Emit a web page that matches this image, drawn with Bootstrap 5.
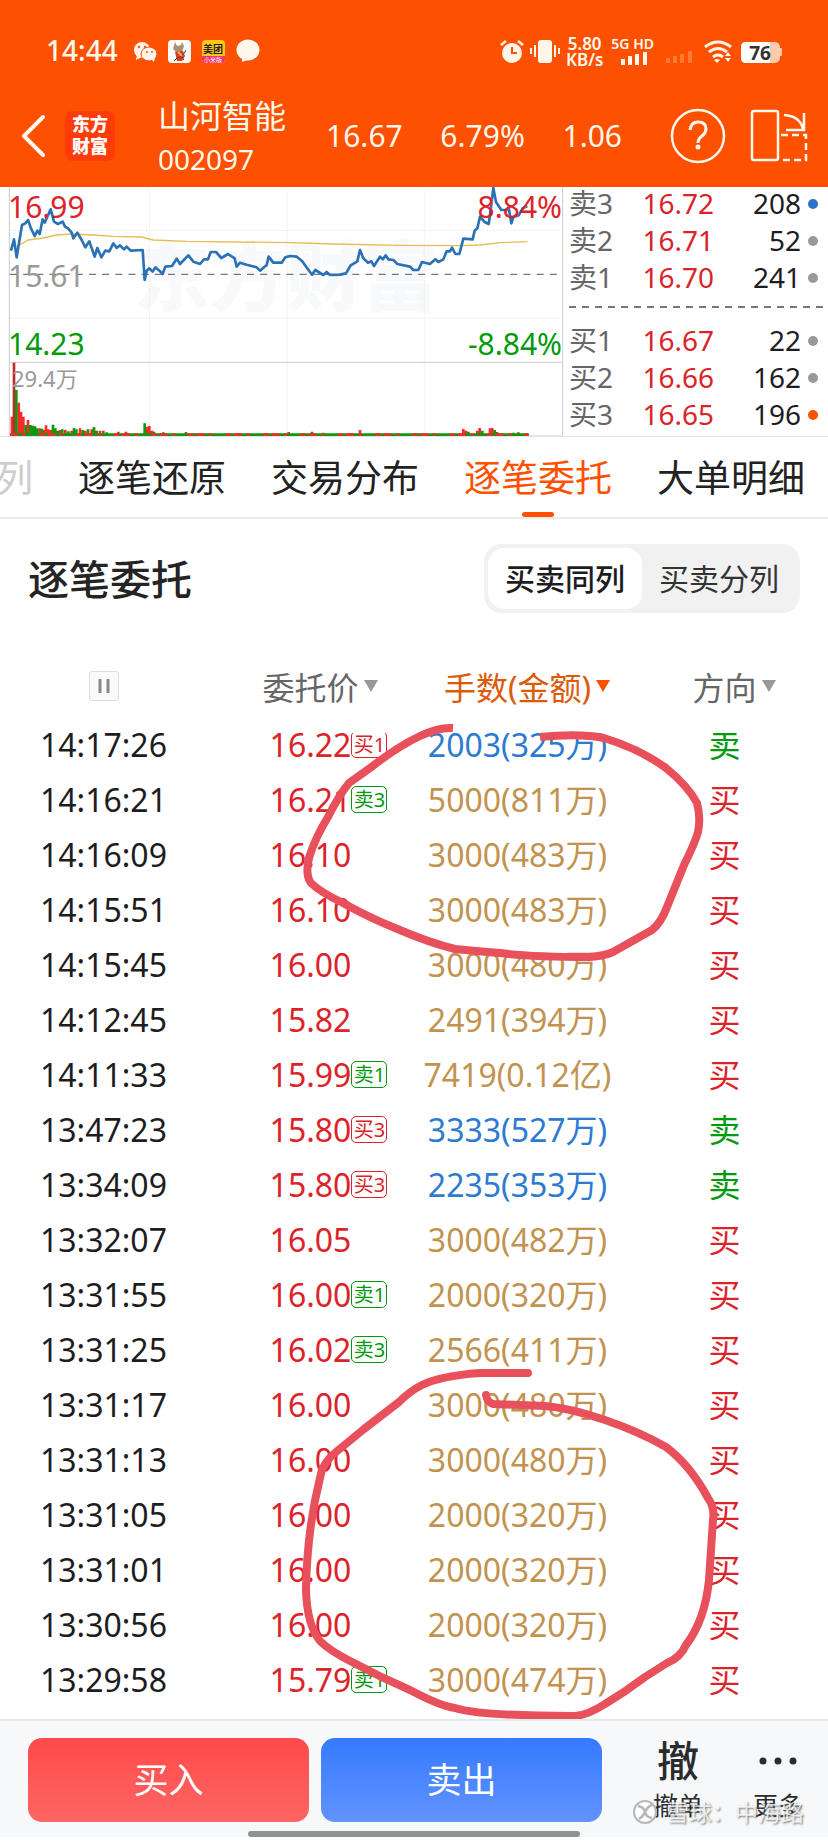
<!DOCTYPE html>
<html lang="zh-CN">
<head>
<meta charset="utf-8">
<meta name="viewport" content="width=device-width, initial-scale=1">
<title>山河智能 002097 逐笔委托</title>
<link href="https://cdn.jsdelivr.net/npm/bootstrap@5.3.0/dist/css/bootstrap.min.css" rel="stylesheet">
<style>
  :root { --brand:#fd5000; --up:#dc2329; --down:#009a0c; --blue:#2d7bd0; --gold:#c29350; }
  body { font-family:"Noto Sans","Noto Sans CJK SC",sans-serif; color:#1d1d1f; background:#fff; overflow-x:hidden; }
  svg { display:block; flex:none; }
  .topbar { background:var(--brand); color:#fff8ec; }
  .status { height:75px; padding:25px 46px 0 46px; }
  .clock { font-size:28px; line-height:50px; font-weight:500; width:88px; }
  .speed { font-size:17px; line-height:16px; font-weight:600; text-align:center; padding-top:3px; }
  .net { font-size:14px; line-height:15px; font-weight:600; }
  .quote { height:112px; padding:10px 20px 0 21px; font-size:30px; line-height:36px; }
  .logo-tile { width:50px; height:50px; border-radius:8px; background:#ff3c0a; color:#fff; font-size:18px; line-height:22px; font-weight:900; text-align:center; padding-top:2px; margin:0 43px 0 19px; }
  .stock-name { font-size:32px; line-height:46px; }
  .stock-code { font-size:28px; line-height:40px; }
  .quote .btn { border:0; padding:0; color:inherit; }
  .market { display:grid; grid-template-columns:565fr 263fr; border-bottom:1px solid #e3e3e3; }
  .chart { width:100%; height:auto; }
  .book { font-size:28px; line-height:37px; padding-left:4px; margin-top:-2px; }
  .book-row { display:grid; grid-template-columns:64px 1fr 87px 24px; align-items:center; padding-right:3px; }
  .book-row span { color:#666; } .book-row b { font-weight:400; color:var(--up); text-align:right; } .book-row em { font-style:normal; text-align:right; }
  .dot { width:10px; height:10px; border-radius:50%; background:#999; justify-self:center; }
  .book hr { margin:10px 4px 14px 0; border:0; height:2px; opacity:1; background:repeating-linear-gradient(90deg,#777 0 7px,transparent 7px 13px); }
  .tabs { height:82px; gap:45px; padding-right:23px; border-bottom:2px solid #ebebeb; overflow:hidden; }
  .tabs a { position:relative; flex:none; font-size:37px; line-height:82px; color:#222; text-decoration:none; white-space:nowrap; }
  .tabs a.faded { color:#ccc; }
  .tabs a.active { color:var(--brand); }
  .tabs a.active::after { content:""; position:absolute; left:50%; bottom:0; width:32px; height:5px; margin-left:-16px; border-radius:3px; background:var(--brand); }
  .section-head { height:123px; padding:0 28px 4px; }
  .section-head h1 { font-size:41px; line-height:60px; font-weight:500; color:#242424; margin:0; }
  .segment { background:#f1f1f2; border-radius:18px; padding:4px; height:69px; }
  .segment label { font-size:30px; line-height:62px; width:154px; text-align:center; border-radius:16px; color:#333; cursor:pointer; }
  .segment .btn-check:checked + label { background:#fff; color:#1d1d1f; font-weight:500; }
  .orders { position:relative; padding-bottom:12px; }
  .orders table { width:100%; table-layout:fixed; text-align:center; font-size:32px; }
  .orders th { height:91px; font-weight:400; color:#666; padding:0; }
  .orders td { padding:0; height:55px; line-height:55px; }
  .orders tr.cut td { height:39px; }
  .orders tr.cut div { height:39px; display:flex; align-items:flex-end; justify-content:center; overflow:hidden; }
  .sorter { position:relative; border:0; background:none; padding:0; color:inherit; }
  .sorter::after { content:""; position:absolute; left:100%; top:50%; margin:-8px 0 0 5px; border:7px solid transparent; border-top:12px solid #999; border-bottom:0; }
  .sorter.on { color:#dc5a0a; } .sorter.on::after { border-top-color:var(--brand); }
  .pause { width:30px; height:30px; border:1px solid #ddd; border-radius:3px; background:#fafafa; padding:0; }
  .pause svg { margin:auto; }
  .price { position:relative; color:var(--up); }
  .tag { position:absolute; left:100%; top:50%; margin:-14px 0 0; font-size:20px; line-height:25px; height:27px; width:36px; border:1px solid currentColor; border-radius:5px; white-space:nowrap; }
  .buy { color:var(--up); } .sell { color:var(--down); }
  .big { color:var(--gold); } .blue { color:var(--blue); }
  .scribble { position:absolute; left:0; top:0; width:100%; height:auto; pointer-events:none; }
  .dock { position:relative; background:#f6f8fa; border-top:2px solid #e8e8ea; padding-top:17px; }
  .dock-row { height:84px; padding:0 0 0 28px; gap:12px; }
  .trade { flex:281 1 0; padding:0; border:0; border-radius:14px; color:#fff; font-size:35px; }
  .trade.in { background:linear-gradient(#ff4a4a,#fd6664); } .trade.out { background:linear-gradient(#357aff,#6293ff); }
  .dock-side { flex:200 1 0; margin:0 0 0 14px; }
  .side-btn { flex:1; border:0; background:none; padding:0; color:#2b2b2e; font-size:25px; line-height:34px; }
  .side-btn .glyph { display:flex; height:46px; margin-bottom:4px; align-items:center; justify-content:center; font-size:42px; font-weight:500; line-height:46px; }
  .home { width:40%; height:6px; border-radius:3px; background:#8f9391; margin:9px auto 3px; }
  .source { position:absolute; right:24px; bottom:8px; font-size:23px; line-height:34px; color:rgba(255,255,255,.8); text-shadow:1px 1px 2px #777; pointer-events:none; gap:8px; }
</style>
</head>
<body>
<header class="topbar">
  <div class="status d-flex align-items-start justify-content-between">
    <div class="d-flex align-items-center">
      <span class="clock">14:44</span>
      <svg width="132" height="50" viewBox="134 25 132 50">
        <ellipse cx="142" cy="50" rx="8" ry="8" fill="#fff5e8"/><path d="M137 55l-1 5 6-3z" fill="#fff5e8"/>
        <ellipse cx="149" cy="54" rx="8" ry="7" fill="#fff5e8" stroke="#fd5000"/><path d="M151 59l3 3 1-5z" fill="#fff5e8"/>
        <g fill="#fd5000"><circle cx="139" cy="47" r="1.2"/><circle cx="145" cy="47" r="1.2"/><circle cx="147" cy="52" r="1"/><circle cx="152" cy="52" r="1"/></g>
        <rect x="168" y="40" width="23" height="23" rx="4" fill="#fff"/>
        <path d="M175 42l2 4 4-1 1-3 2 4-2 6-5 1-4-4z" fill="#a99172"/><path d="M175 52l8-1 2 5-3 5h-5z" fill="#e0382c"/><path d="M186 50c-3 6-5 6-10 9m2-7 6 8m-7-2-3 3" stroke="#453b30" fill="none"/><path d="M178 52l4 4" stroke="#f2c230" stroke-width="2"/>
        <rect x="202" y="40" width="23" height="23" rx="4" fill="#ffc81a"/><path d="M202 56h23v3q0 4-4 4h-15q-4 0-4-4z" fill="#f5326e"/>
        <text x="213" y="53" font-size="10" font-weight="700" text-anchor="middle" fill="#222">美团</text>
        <text x="213" y="62" font-size="6" text-anchor="middle" fill="#fff">小米版</text>
        <ellipse cx="248" cy="50" rx="11.5" ry="10.5" fill="#fff8ec"/><path d="M242 57v5l8-3z" fill="#fff8ec"/>
      </svg>
    </div>
    <div class="d-flex align-items-center">
      <svg width="64" height="50" viewBox="496 25 64 50" fill="none" stroke="#fff5e8" stroke-width="2">
        <circle cx="510" cy="53" r="10" fill="#fff5e8" stroke="none"/><path d="M499 45l5-4m12 0 5 4" stroke-width="2.5"/><path d="M510 47v6h5" stroke="#fd5000"/>
        <rect x="536" y="40" width="14" height="23" rx="3" fill="#fff5e8" stroke="none"/><path d="M533 45v12m-4-9v6m24-9v12m4-9v6"/>
      </svg>
      <div class="speed ms-1">5.80<br>KB/s</div>
      <div class="net ms-2">5G HD
        <svg width="38" height="14" viewBox="0 0 38 14" fill="#fff8ec"><path d="M10 8h4v6h-4zM17 5h4v9h-4zM24 3h4v11h-4zM32 1h4v13h-4z"/></svg>
      </div>
      <svg class="ms-1" width="124" height="50" viewBox="658 25 124 50">
        <path d="M666 58h4v5h-4zM673 56h4v7h-4zM680 54h4v9h-4zM688 51h4v12h-4z" fill="#ff7a35"/>
        <g fill="none" stroke="#fff5e8" stroke-width="3"><path d="M705 47q13-10 26 0M709 52q9-7 18 0M713 57q5-4 10 0"/></g>
        <path d="M714 60q3-2 6 0l-3 3z" fill="#fff5e8"/><path d="M725 56l3-4 3 4zM725 58l3 4 3-4z" fill="#fff5e8"/>
        <rect x="741" y="42" width="39" height="21" rx="5" fill="#ffc9ac"/><path d="M746 42h24v21h-24q-5 0-5-5v-11q0-5 5-5z" fill="#fff"/><rect x="779" y="48" width="3" height="8" rx="1" fill="#ffc9ac"/>
        <text x="760" y="60" font-size="19" font-weight="700" text-anchor="middle" fill="#333">76</text>
      </svg>
    </div>
  </div>
  <div class="quote d-flex align-items-center">
    <button class="btn" aria-label="返回"><svg width="25" height="44" viewBox="0 0 25 44" fill="none" stroke="#fff8ec" stroke-width="4" stroke-linecap="round" stroke-linejoin="round"><path d="M22 3 3 22l19 19"/></svg></button>
    <div class="logo-tile">东方<br>财富</div>
    <div class="me-4">
      <div class="stock-name">山河智能</div>
      <div class="stock-code">002097</div>
    </div>
    <div class="d-flex flex-grow-1 justify-content-between ps-3 pe-5"><span>16.67</span><span>6.79%</span><span>1.06</span></div>
    <button class="btn" aria-label="帮助"><svg width="56" height="56" viewBox="0 0 56 56" fill="none" stroke="#fff8ec" stroke-width="2.5"><circle cx="28" cy="28" r="26"/><path d="M20 22q1-8 8-8 8 0 8 7 0 4-4 7-4 3-4 7" stroke-width="3"/><circle cx="28" cy="39" r="2.5" fill="#fff8ec" stroke="none"/></svg></button>
    <button class="btn ms-4" aria-label="横屏"><svg width="58" height="54" viewBox="0 0 58 54" fill="none" stroke="#fff8ec" stroke-width="2.5"><rect x="2" y="2" width="26" height="49" rx="2"/><path d="M34 6q16 1 19 14M54 4v17H36"/><path d="M31 26h25v25H31" stroke-dasharray="7 4"/></svg></button>
  </div>
</header>

<section class="market">
  <svg class="chart" viewBox="0 0 565 249">
    <text x="134" y="118" font-size="76" font-weight="900" fill="#f8f9fa">东方财富</text>
    <g transform="scale(.33333) translate(0 -21)" fill="none">
      <path d="M448 30V768M861 30V768M1273 30V768M30 151H1685M30 414H1685" stroke="#ddd" stroke-width="3" stroke-dasharray="3 5"/>
      <path d="M28 22V768M1688 22V768M28 547H1686M28 768H1688" stroke="#ccc" stroke-width="3"/>
      <path d="M30 283H1686" stroke="#777" stroke-width="4" stroke-dasharray="21 18.5"/>
      <path d="M50 200 85 180 130 174 170 165 215 162 280 165 340 169 425 171 460 180 560 184 870 188 1000 192 1200 196 1380 197 1440 195 1500 188 1582 185" stroke="#e6bd52" stroke-width="4"/>
      <g stroke-width="8">
        <path stroke="#f82a2c" d="M36 767V710M56 767V668M63 767V695M70 767V710M84 767V720M119 767V745M133 767V750M138 767V736M145 767V748M152 767V750M180 767V750M196 767V750M215 767V752M240 767V745M256 767V752M275 767V748M300 767V752M310 767V752M355 767V755M378 767V755M441 767V740M448 767V738M456 767V752M558 767V756M866 767V756M1080 767V750M1390 767V747M1398 767V752M1432 767V752M1439 767V744M1470 767V745M1477 767V744M1555 767V757"/>
        <path stroke="#c02a2c" d="M42 767V548"/>
        <path stroke="#12960f" d="M49 767V630M77 767V735M91 767V735M98 767V737M105 767V739M112 767V745M126 767V746M159 767V734M166 767V745M173 767V752M187 767V748M205 767V754M222 767V744M229 767V748M248 767V750M264 767V748M282 767V741M290 767V752M320 767V757M434 767V730M462 767V755M490 767V757M936 767V755M970 767V758M1405 767V755M1447 767V752M1484 767V750M1491 767V756M1540 767V758"/>
        <path stroke="#12960f" d="M30 764H1586"/><path stroke="#e8302a" d="M30 764H1586" stroke-dasharray="24 14 9 40 16 9"/>
      </g>
      <path stroke="#2b71b5" stroke-width="8" stroke-linejoin="round" d="M33 212 42 178 50 232 66 135 76 130 84 120 93 145 104 168 112 152 119 162 128 118 134 128 152 88 162 125 174 132 188 125 195 140 205 146 215 158 220 175 232 158 245 180 256 202 268 184 284 230 292 204 304 232 316 212 328 214 340 190 350 204 360 196 372 208 380 200 392 212 428 210 434 300 440 272 448 265 458 275 466 262 478 272 488 282 496 260 516 258 530 236 540 252 565 226 580 245 600 252 612 238 624 238 632 216 648 216 664 234 684 222 704 235 710 260 720 248 740 254 770 262 780 272 800 255 806 230 820 248 845 248 856 232 870 228 890 230 906 243 936 284 946 270 970 285 980 276 990 285 1020 284 1038 280 1052 256 1072 244 1080 210 1090 235 1104 248 1114 244 1122 258 1140 230 1148 238 1157 226 1165 238 1180 240 1192 252 1230 260 1240 270 1255 270 1266 246 1290 252 1306 238 1315 246 1330 238 1340 214 1350 214 1356 203 1366 222 1378 222 1390 176 1418 178 1424 152 1432 145 1440 110 1454 126 1466 132 1472 90 1480 24 1488 66 1504 90 1520 90 1526 82 1534 130 1540 112 1556 106 1568 85 1582 78"/>
    </g>
    <g font-size="30">
      <text x="8" y="31" fill="#dc2329">16.99</text><text x="8" y="100" fill="#999">15.61</text><text x="8" y="168" fill="#009a0c">14.23</text>
      <text x="562" y="31" fill="#dc2329" text-anchor="end">8.84%</text><text x="562" y="168" fill="#009a0c" text-anchor="end">-8.84%</text>
      <text x="12" y="200" font-size="22" fill="#999">29.4万</text>
    </g>
  </svg>
  <div class="book">
    <div class="book-row"><span>卖3</span><b>16.72</b><em>208</em><i class="dot" style="background:#2d73cc"></i></div>
    <div class="book-row"><span>卖2</span><b>16.71</b><em>52</em><i class="dot"></i></div>
    <div class="book-row"><span>卖1</span><b>16.70</b><em>241</em><i class="dot"></i></div>
    <hr>
    <div class="book-row"><span>买1</span><b>16.67</b><em>22</em><i class="dot"></i></div>
    <div class="book-row"><span>买2</span><b>16.66</b><em>162</em><i class="dot"></i></div>
    <div class="book-row"><span>买3</span><b>16.65</b><em>196</em><i class="dot" style="background:#fd5000"></i></div>
  </div>
</section>

<nav class="tabs d-flex justify-content-end">
  <a class="faded" href="#">列</a><a href="#">逐笔还原</a><a href="#">交易分布</a><a class="active" href="#">逐笔委托</a><a href="#">大单明细</a>
</nav>

<div class="section-head d-flex align-items-center justify-content-between">
  <h1>逐笔委托</h1>
  <div class="segment d-flex">
    <input class="btn-check" type="radio" name="view" id="v1" checked><label for="v1">买卖同列</label>
    <input class="btn-check" type="radio" name="view" id="v2"><label for="v2">买卖分列</label>
  </div>
</div>

<main class="orders">
  <table>
    <thead><tr>
      <th><button class="pause" aria-label="暂停"><svg width="14" height="16" viewBox="0 0 14 16"><path d="M3 1v14M11 1v14" stroke="#888" stroke-width="3"/></svg></button></th>
      <th><button class="sorter">委托价</button></th><th><button class="sorter on">手数(金额)</button></th><th><button class="sorter">方向</button></th>
    </tr></thead>
    <tbody>
      <tr class="cut"><td><div>14:17:26</div></td><td><div><span class="price">16.22<span class="tag buy">买1</span></span></div></td><td class="blue"><div>2003(325万)</div></td><td class="sell"><div>卖</div></td></tr>
      <tr><td>14:16:21</td><td><span class="price">16.21<span class="tag sell">卖3</span></span></td><td class="big">5000(811万)</td><td class="buy">买</td></tr>
      <tr><td>14:16:09</td><td><span class="price">16.10</span></td><td class="big">3000(483万)</td><td class="buy">买</td></tr>
      <tr><td>14:15:51</td><td><span class="price">16.10</span></td><td class="big">3000(483万)</td><td class="buy">买</td></tr>
      <tr><td>14:15:45</td><td><span class="price">16.00</span></td><td class="big">3000(480万)</td><td class="buy">买</td></tr>
      <tr><td>14:12:45</td><td><span class="price">15.82</span></td><td class="big">2491(394万)</td><td class="buy">买</td></tr>
      <tr><td>14:11:33</td><td><span class="price">15.99<span class="tag sell">卖1</span></span></td><td class="big">7419(0.12亿)</td><td class="buy">买</td></tr>
      <tr><td>13:47:23</td><td><span class="price">15.80<span class="tag buy">买3</span></span></td><td class="blue">3333(527万)</td><td class="sell">卖</td></tr>
      <tr><td>13:34:09</td><td><span class="price">15.80<span class="tag buy">买3</span></span></td><td class="blue">2235(353万)</td><td class="sell">卖</td></tr>
      <tr><td>13:32:07</td><td><span class="price">16.05</span></td><td class="big">3000(482万)</td><td class="buy">买</td></tr>
      <tr><td>13:31:55</td><td><span class="price">16.00<span class="tag sell">卖1</span></span></td><td class="big">2000(320万)</td><td class="buy">买</td></tr>
      <tr><td>13:31:25</td><td><span class="price">16.02<span class="tag sell">卖3</span></span></td><td class="big">2566(411万)</td><td class="buy">买</td></tr>
      <tr><td>13:31:17</td><td><span class="price">16.00</span></td><td class="big">3000(480万)</td><td class="buy">买</td></tr>
      <tr><td>13:31:13</td><td><span class="price">16.00</span></td><td class="big">3000(480万)</td><td class="buy">买</td></tr>
      <tr><td>13:31:05</td><td><span class="price">16.00</span></td><td class="big">2000(320万)</td><td class="buy">买</td></tr>
      <tr><td>13:31:01</td><td><span class="price">16.00</span></td><td class="big">2000(320万)</td><td class="buy">买</td></tr>
      <tr><td>13:30:56</td><td><span class="price">16.00</span></td><td class="big">2000(320万)</td><td class="buy">买</td></tr>
      <tr><td>13:29:58</td><td><span class="price">15.79<span class="tag sell">卖1</span></span></td><td class="big">3000(474万)</td><td class="buy">买</td></tr>
    </tbody>
  </table>
  <svg class="scribble" viewBox="0 642 828 1078" fill="none" stroke="#e8505b" stroke-width="8" stroke-linejoin="round">
    <path d="M453 728Q439 727 420 736Q397 747 370 768L349 783Q339 795 328 817Q315 838 309 858Q305 875 311 883Q320 892 343 903Q370 918 395 928Q430 943 455 949Q475 951 500 953Q530 957 590 957Q604 956 613 952L652 930Q661 923 667 907L684 865Q695 843 698 832Q701 818 697 803Q688 786 666 768Q640 749 604 738Q580 733 540 737"/>
    <path d="M528 1373H480Q440 1376 422 1385Q410 1391 399 1402L364 1429L336 1452Q322 1463 320 1478Q307 1530 306 1590Q307 1625 320 1641Q330 1651 352 1662Q380 1677 410 1690Q440 1706 455 1708Q480 1716 575 1716Q588 1715 605 1704Q625 1692 645 1677L667 1663Q680 1658 686 1645Q705 1620 709 1580L713 1520Q715 1508 708 1498Q690 1465 666 1447Q640 1432 605 1420Q570 1408 545 1406L493 1404Q487 1402 486 1395" stroke-linecap="round"/>
  </svg>
</main>

<footer class="dock">
  <div class="dock-row d-flex">
    <button class="trade in">买入</button><button class="trade out">卖出</button>
    <div class="dock-side d-flex">
      <button class="side-btn"><span class="glyph">撤</span>撤单</button>
      <button class="side-btn"><span class="glyph"><svg width="38" height="8" viewBox="0 0 38 8" fill="#2b2b2e"><circle cx="4" cy="4" r="3.5"/><circle cx="19" cy="4" r="3.5"/><circle cx="34" cy="4" r="3.5"/></svg></span>更多</button>
    </div>
  </div>
  <div class="home"></div>
  <div class="source d-flex align-items-center"><svg width="26" height="26" viewBox="0 0 26 26" fill="none" stroke="#b5b8ba" stroke-width="2"><circle cx="13" cy="13" r="11" fill="#fff"/><path d="M6 7q6 1 7 6t7 6M20 6q-5 2-7 7t-6 7" stroke-width="2.5"/></svg><span>雪球：中海路</span></div>
</footer>
<script src="https://cdn.jsdelivr.net/npm/bootstrap@5.3.0/dist/js/bootstrap.bundle.min.js"></script>
</body>
</html>
